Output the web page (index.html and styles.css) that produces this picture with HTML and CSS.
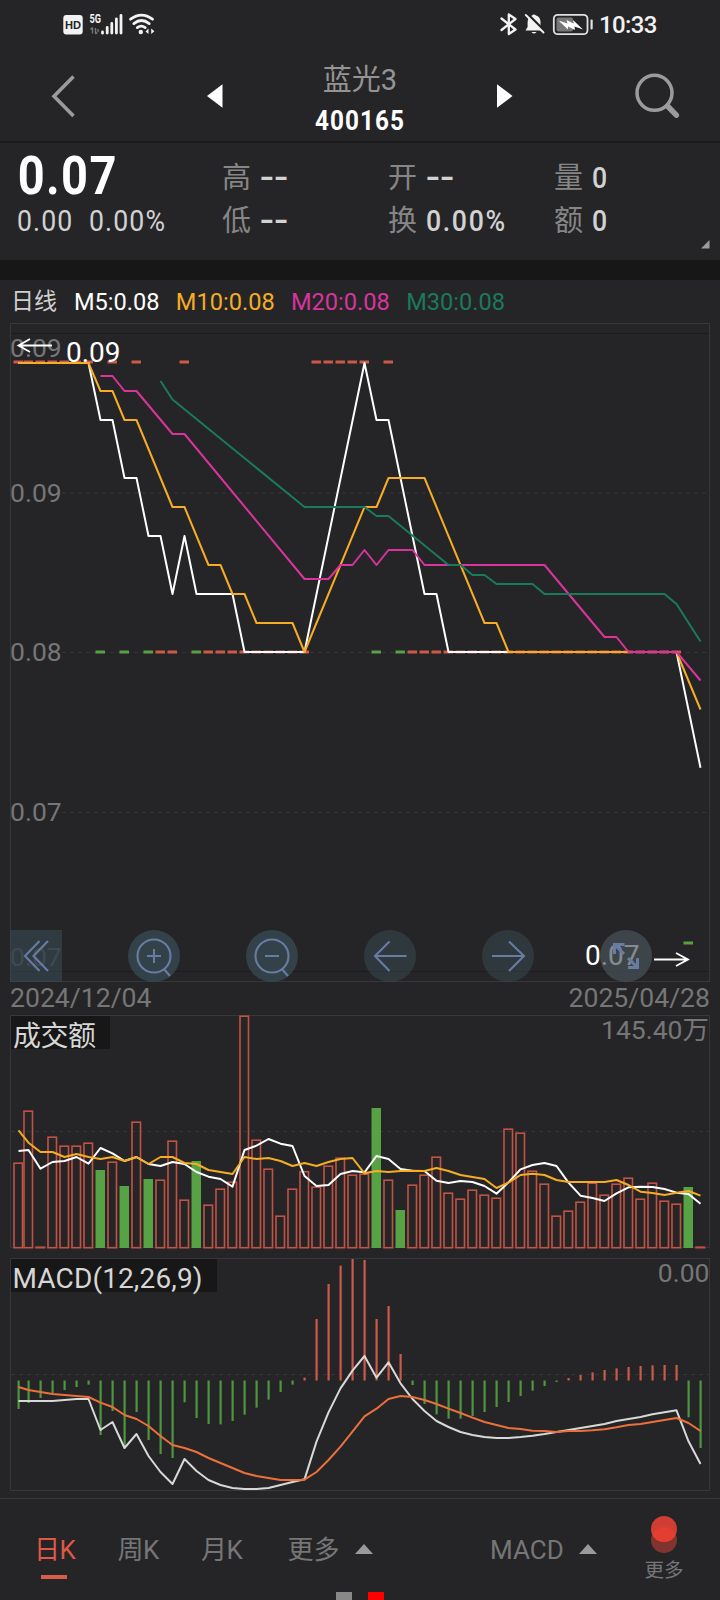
FILE: index.html
```html
<!DOCTYPE html>
<html lang="zh-CN">
<head>
<meta charset="utf-8">
<title>蓝光3 400165</title>
<link rel="stylesheet" href="styles.css">
</head>
<body>
<div class="status">
  <svg class="status-left" width="100" height="48" viewBox="60 0 100 48">
    <rect x="63.3" y="15" width="19.4" height="19.6" rx="3" fill="#f2f2f2"/>
    <text x="73" y="29.2" class="hd" text-anchor="middle" textLength="16" lengthAdjust="spacingAndGlyphs">HD</text>
    <text x="89.5" y="22.5" class="fiveg" textLength="11.5" lengthAdjust="spacingAndGlyphs">5G</text>
    <path d="M92.5 27.5v6M90.5 29.5l2-2M95.5 28v6M97.500 32.500l-2 1.500M98 29v3" stroke="#777" stroke-width="1.400" fill="none"/>
    <path d="M102.500 32v1.200M107.200 27.500v5.500M111.800 23.500v9.500M116.400 19v14M121 15.500v17.500" stroke="#f2f2f2" stroke-width="2.800" stroke-linecap="round"/>
    <g fill="none" stroke="#f2f2f2" stroke-width="2.800" stroke-linecap="round">
      <path d="M130.500 19.200Q141.500 11 152.500 19.200M133.800 23.600Q141.500 17.500 149.200 23.600M137.300 27.600Q141.200 24.600 145.200 27.600"/>
    </g>
    <circle cx="140.800" cy="32" r="2.200" fill="#f2f2f2"/>
    <path d="M148.500 28.500v5.500l-3-2.500zM151.200 34v-5.500l3.200 2.800z" fill="#f2f2f2"/>
  </svg>
  <div class="status-right">
    <svg width="100" height="48" viewBox="496 0 100 48">
      <path d="M501.500 18.500L515.500 29.500L508.800 34V14.500L515.500 19L501.500 30" fill="none" stroke="#f2f2f2" stroke-width="2.300" stroke-linejoin="round" stroke-linecap="round"/>
      <path d="M526 30.500H543L540.500 27V21.500Q540 16.500 536 15.500Q534 13.300 532 15.500Q527.800 17 527.600 22V27L525.500 30.500ZM531.500 32h5q-2.500 3.200-5 0z" fill="#f2f2f2"/>
      <path d="M527 13.500L545.500 32" stroke="#252527" stroke-width="2.500"/>
      <path d="M525.800 15L543.500 32.500" stroke="#f2f2f2" stroke-width="1.900" stroke-linecap="round"/>
      <rect x="553.800" y="14.800" width="33.700" height="19.400" rx="4" fill="none" stroke="#e0e0e0" stroke-width="1.800"/>
      <rect x="556.500" y="17.500" width="16.500" height="14" rx="2" fill="#777"/>
      <path d="M558.500 20.500L567.500 23.500L566.500 20L573.500 23.500L573 20L583 29.500L574.500 26.500L575 30L568 26.500L568 29.500Z" fill="#fff"/>
      <rect x="590.500" y="19.500" width="2.200" height="10" rx="1" fill="#e0e0e0"/>
    </svg>
    <span class="clock">10:33</span>
  </div>
</div>

<header class="header">
  <svg class="back" width="40" height="48" viewBox="44 72 40 48"><path d="M73.500 76.500L54 96.200L73.500 116" fill="none" stroke="#9b9b9b" stroke-width="3.600"/></svg>
  <svg class="prev" width="16" height="24" viewBox="0 0 16 24"><path d="M0 12L15.500 .3V23.700Z" fill="#fff"/></svg>
  <div class="title"><div class="name">蓝光<span>3</span></div><div class="code">400165</div></div>
  <svg class="next" width="16" height="24" viewBox="0 0 16 24"><path d="M15.500 12L0 .3V23.700Z" fill="#fff"/></svg>
  <svg class="search" width="48" height="48" viewBox="634 72 48 48"><circle cx="654.500" cy="92.800" r="17.500" fill="none" stroke="#9b9b9b" stroke-width="3.500"/><path d="M667.500 106L676.300 115.200" stroke="#9b9b9b" stroke-width="5.500" stroke-linecap="round"/></svg>
</header>

<section class="quote">
  <div class="price"><div class="last">0.07</div><div class="chg"><span>0.00</span><span>0.00%</span></div></div>
  <div class="pair"><div><i>高</i><b class="dash">--</b></div><div><i>低</i><b class="dash">--</b></div></div>
  <div class="pair"><div><i>开</i><b class="dash">--</b></div><div><i>换</i><b>0.00%</b></div></div>
  <div class="pair"><div><i>量</i><b>0</b></div><div><i>额</i><b>0</b></div></div>
  <svg class="corner" width="9" height="9" viewBox="0 0 9 9"><path d="M8.500 0V8.500H0Z" fill="#9b9b9b"/></svg>
</section>

<div class="legend"><span class="kline">日线</span><span class="m5">M5:0.08</span><span class="m10">M10:0.08</span><span class="m20">M20:0.08</span><span class="m30">M30:0.08</span></div>

<svg class="chart" width="720" height="660" viewBox="0 323 720 660">
  <rect class="frame" x="10.500" y="323.500" width="699" height="658"/>
  <path d="M11 333.500H709M11 971.500H709" stroke="#1c1c1e"/>
  <path class="grid" d="M62 493H709M62 652.500H709M62 812.500H709"/>
  <g class="axis"><text x="10" y="356.700">0.09</text><text x="10" y="502">0.09</text><text x="10" y="661">0.08</text><text x="10" y="821">0.07</text><text x="10" y="966" opacity=".35">0.07</text></g>
  <g id="candles"></g>
  <g id="averages"></g>
  <g class="mark"><text x="66" y="362">0.09</text><text x="585" y="964.600">0.07</text></g>
  <path d="M52 345.500H19M30 339L18.500 345.500L30 352M654 959.500H687M676 953L688 959.500L676 966" fill="none" stroke="#fff" stroke-width="1.800"/>
  <g fill="#3b515c" fill-opacity=".5">
    <rect x="10" y="930" width="52" height="52"/>
    <circle cx="154" cy="956" r="26" fill-opacity=".64"/><circle cx="272" cy="956" r="26" fill-opacity=".64"/>
    <circle cx="390" cy="956" r="26" fill-opacity=".44"/><circle cx="508" cy="956" r="26" fill-opacity=".44"/>
  </g>
  <circle cx="626" cy="956" r="26" fill="#4b565c" fill-opacity=".68"/>
  <g fill="none" stroke="#687ca3" stroke-width="2.100">
    <path d="M39.500 941L25 956L39.500 971M48 941L33.500 956L48 971"/>
    <circle cx="154" cy="956" r="16.500"/><path d="M163.500 968.500L170 976M147 956H161M154 949V963"/>
    <circle cx="272" cy="956" r="16.500"/><path d="M281.500 968.500L288 976M265 956H279"/>
    <path d="M389.500 941.500L375 956L389.500 971M375 956H406.500M509 941.500L524 956L509 971M524 956H492"/>
    <path d="M624.500 944.500H614.500V954M615 945L624 954M628 967.500H637.500V958M637 967L628 958" stroke-width="3"/>
  </g>
</svg>

<div class="dates"><span>2024/12/04</span><span>2025/04/28</span></div>

<svg class="chart volume" width="720" height="234" viewBox="0 1015 720 234">
  <rect class="frame" x="10.500" y="1015.500" width="699" height="232"/>
  <path class="grid" d="M11 1131.500H709"/>
  <g id="volume"></g>
  <g class="axis"><text x="709" y="1039" text-anchor="end">145.40万</text></g>
  <rect x="11" y="1016" width="99" height="33" fill="#171717"/>
  <text class="caption" x="13" y="1045.500" textLength="83">成交额</text>
</svg>

<svg class="chart macd" width="720" height="234" viewBox="0 1258 720 234">
  <rect class="frame" x="10.500" y="1258.500" width="699" height="232"/>
  <path class="grid" d="M11 1374.500H709"/>
  <rect x="11" y="1259" width="206" height="33" fill="#171717"/>
  <g class="axis"><text x="709.500" y="1282" text-anchor="end">0.00</text></g>
  <text class="caption" x="12.500" y="1288" textLength="190">MACD(12,26,9)</text>
  <g id="macd"></g>
</svg>

<nav class="tabs">
  <span class="tab active">日K</span><span class="tab">周K</span><span class="tab">月K</span>
  <span class="tab menu">更多<i class="up"></i></span>
  <span class="tab menu indicator">MACD<i class="up"></i></span>
  <div class="more">
    <svg width="28" height="40" viewBox="0 0 28 40"><circle cx="14" cy="25" r="13" fill="#81332f"/><circle cx="14" cy="14" r="13" fill="#cf3d33"/><path d="M2.200 19.500A13 13 0 0 1 25.800 19.500A13 13 0 0 1 2.200 19.500Z" fill="#e33e30"/></svg>
    <span>更多</span>
  </div>
  <div class="pages"><i></i><i class="on"></i></div>
</nav>
<script src="charts.js"></script>
</body>
</html>
```

FILE: styles.css
```css
* { box-sizing: border-box; }
body { margin: 0; width: 720px; height: 1600px; overflow: hidden; display: flex; flex-direction: column; background: #252527; color: #fff; font-family: Roboto, "Noto Sans CJK SC", sans-serif; }
svg { display: block; flex: none; }
i, b { font-style: normal; font-weight: 400; }
.status { height: 48px; flex: none; display: flex; justify-content: space-between; padding: 0 63px 0 60px; }
.status-right { display: flex; }
.clock { width: 61px; font-size: 24px; line-height: 50px; font-weight: 500; letter-spacing: -.6px; padding-left: 3px; color: #f2f2f2; }
.hd { font: 700 11px "Liberation Sans", sans-serif; fill: #252527; }
.fiveg { font-size: 12px; font-weight: 700; fill: #f2f2f2; }
.header { height: 95px; flex: none; display: flex; border-bottom: 2px solid #1b1b1d; padding: 0 38px 0 44px; }
.back, .search { margin-top: 24px; }
.prev { margin: 36px 0 0 123px; }
.title { width: 274px; text-align: center; }
.name { margin-top: 12px; height: 41px; line-height: 40px; font-size: 29px; font-weight: 400; color: #949494; }
.code { line-height: 38px; font-size: 27px; font-weight: 700; letter-spacing: 1.2px; margin-top: 1px; transform: scaleX(.9); }
.next { margin-top: 36px; }
.search { margin-left: auto; }
.quote { height: 117px; flex: none; display: flex; position: relative; padding-left: 16px; }
.price { width: 206px; }
.last { font-size: 54px; font-weight: 700; line-height: 44px; margin-top: 11px; transform: scaleX(.87); transform-origin: left; letter-spacing: 1.6px; height: 45px; padding-left: 2px; }
.chg { display: flex; gap: 17px; font-size: 29px; line-height: 45px; color: #d2d2d2; letter-spacing: 1.2px; transform: scaleX(.92); transform-origin: left; padding-left: 1px; }
.pair { width: 166px; padding-top: 14px; }
.pair > div { height: 43px; line-height: 43px; display: flex; gap: 8px; font-size: 29px; color: #d2d2d2; }
.pair i { font-size: 29px; font-weight: 400; color: #868686; line-height: 42px; width: 29px; }
.pair b { font-weight: 500; letter-spacing: 1.8px; transform: scaleX(.92); transform-origin: left; padding-left: 1px; }
.pair .dash { font-weight: 700; transform: translate(-1px, -1px) scaleX(1.35); letter-spacing: -1px; }
.corner { position: absolute; right: 10px; bottom: 11px; }
.legend { height: 63px; flex: none; border-top: 20px solid #171717; display: flex; gap: 16.300px; padding-left: 11px; font-size: 23.600px; line-height: 44px; }
.kline { font-size: 23px; color: #d0d0d0; width: 46.700px; }
.m10 { color: #f6ad24; }
.m20 { color: #d9349e; }
.m30 { color: #1a7a5a; }
.chart text { font-size: 26.500px; }
.frame { fill: none; stroke: #373739; }
.grid { stroke: #363638; stroke-dasharray: 4 4; fill: none; }
.axis { fill: #767676; }
.chart .mark text { font-size: 28px; fill: #fff; }
.chart .caption { font-size: 28px; fill: #d6d6d6; }
.line { fill: none; stroke-width: 2; stroke-linejoin: round; }
.dates { height: 32px; flex: none; display: flex; justify-content: space-between; padding: 0 10px; font-size: 26.600px; line-height: 29px; color: #767676; }
.macd { margin-top: 9px; }
.tabs { margin-top: 6px; flex: 1; border-top: 1px solid #38383a; position: relative; display: flex; padding-left: 34px; color: #767676; font-size: 26px; }
.tab { width: 83.500px; line-height: 103px; height: 81px; white-space: nowrap; letter-spacing: -.4px; }
.tab.active { color: #de5845; position: relative; }
.tab.active::after { content: ""; position: absolute; left: 7px; top: 76px; width: 26px; height: 4px; background: #d95c4b; }
.menu { display: flex; width: 205.500px; padding-left: 3px; letter-spacing: 0; }
.up { width: 0; height: 0; border: 9px solid transparent; border-top: 0; border-bottom: 10px solid #9a9a9a; margin: 45px 0 0 15px; }
.indicator { width: 152px; padding-left: 0; }
.more { font-size: 19.500px; line-height: 32px; display: flex; flex-direction: column; align-items: center; width: 44px; padding-top: 16px; }
.pages { position: absolute; left: 336px; bottom: 0; display: flex; gap: 16px; }
.pages i { width: 16px; height: 8px; background: #888; }
.pages .on { background: #f00; }
```

FILE: charts.js
```js
const NS = 'http://www.w3.org/2000/svg';
const RED = '#cb5a4a', GREEN = '#57a244';
const X = i => i === 0 ? 18.5 : 16.5 + 12 * i;

function add(id, tag, attrs) {
  const el = document.createElementNS(NS, tag);
  for (const k in attrs) el.setAttribute(k, attrs[k]);
  document.getElementById(id).appendChild(el);
}
function line(id, points, color) {
  add(id, 'polyline', { class: 'line', stroke: color, points: points.map(([i, y]) => X(i) + ',' + y).join(' ') });
}

// Daily candles: flat sessions at one of three prices.
const range = (a, b) => Array.from({ length: b - a + 1 }, (_, k) => a + k);
const candle = (i, y, c) => add('candles', 'rect', { x: X(i) - 5, y: y - 1.5, width: 9.5, height: 3, fill: c });
[...range(0, 6), 8, 10, 14, ...range(25, 29), 31].forEach(i => candle(i, 362, RED));
[12, 13, ...range(16, 24), ...range(33, 55)].forEach(i => candle(i, 652, RED));
[7, 9, 11, 15, 30, 32].forEach(i => candle(i, 652, GREEN));
candle(56, 943, GREEN);

// Moving averages.
line('averages', [[0,363],[6,363],[7,420],[8,420],[9,478],[10,478],[11,536],[12,536],[13,594],[14,536],[15,594],[18,594],[19,652],[24,652],[29,363],[30,420],[31,420],[34,594],[35,594],[36,652],[55,652],[57,767.7]], '#fff');
line('averages', [[0,363],[6,363],[7,391],[8,391],[9,420],[10,420],[13,507],[14,507],[16,565],[17,565],[18,594],[19,594],[20,623],[23,623],[24,652],[29,507],[30,507],[31,478],[34,478],[39,623],[40,623],[41,652],[55,652],[57,709.5]], '#f6ad24');
line('averages', [[7,376],[8,376],[9,391],[10,391],[13,434],[14,434],[24,579],[26,579],[27,565],[28,565],[29,550],[30,565],[31,550],[33,550],[34,565],[44,565],[49,637],[50,637],[51,652],[55,652],[57,680.5]], '#d9349e');
line('averages', [[12,381],[13,399.5],[24,507],[29,507],[30,516],[31,516],[36,565],[37,565],[38,575],[39,575],[40,584],[43,584],[44,594],[54,594],[55,604],[57,641.5]], '#1a7a5a');

// Turnover bars with their two averages.
const vol = [1163,1111,1247,1137,1146,1146,1143,1170,1162,1186,1122,1179,1180,1141,1200,1161,1205,1189,1182,1016,1140,1169,1216,1189,1171.5,1187,1166,1158,1175,1174,1108,1180,1210,1185,1175,1157,1193,1199,1190,1195,1198,1129,1133,1171,1184,1216,1211,1202,1183,1195,1184,1178,1199,1183,1201,1204,1187,1247];
const down = [7, 9, 11, 15, 30, 32, 56];
vol.forEach((y, i) => {
  if (down.includes(i)) add('volume', 'rect', { x: X(i) - 5, y, width: 9.5, height: 1248 - y, fill: GREEN });
  else add('volume', 'rect', { x: X(i) - 4.5, y: y + .2, width: 8.5, height: 1247.5 - y, fill: 'none', stroke: '#c25344', 'stroke-width': 1.6 });
});
const scaled = (base, a) => a.map((z, i) => [i, base + z / 3]);
line('volume', scaled(1010, [423,420,476,456,453,441,461,414,430,453,441,462,468,456,462,486,500,507,530,420,407,387,401,408,498,528,525,492,483,487,438,447,477,482,483,512,519,513,516,528,551,517,478,465,459,468,518,557,564,573,550,532,530,531,537,548,552,581]), '#fff');
line('volume', scaled(1010, [361,398,426,426,441,432,441,447,441,453,441,462,441,441,459,462,480,486,492,441,447,444,453,468,459,468,456,447,444,490,483,486,483,482,483,474,483,495,501,507,534,518,495,491,495,510,516,516,516,516,510,525,545,549,555,548,543,557]), '#f6ad24');

// MACD histogram, DIF and DEA.
[477,459,444,430,420,411,404,555,483,590,486,570,612,624,457,504,522,523,513,494,473,449,426,404,383,207,102,47,27,30,207,168,312,405,462,493,506,506,498,486,471,456,438,422,408,396,384,375,367,360,355,351,348,346,345,345,502,594].forEach((z, i) => {
  const y = 1250 + z / 3, zero = 1380.5;
  add('macd', 'rect', { x: X(i) - 1, y: Math.min(y, zero), width: 2.2, height: Math.abs(y - zero), fill: y < zero ? RED : '#4f9641' });
});
line('macd', scaled(1250, [453,453,453,453,450,447,447,540,516,594,552,618,666,702,627,663,690,705,714,717,717,714,705,696,688,575,487,415,362,318,383,337,400,447,483,513,531,546,555,561,564,564,561,557,552,546,540,534,528,522,513,507,501,493,487,481,574,642]), '#d8d8d8');
line('macd', scaled(1250, [411,420,426,432,435,438,441,458,471,495,507,528,558,585,594,606,624,639,654,669,678,684,690,690,689,666,630,590,545,499,476,447,438,441,450,462,476,489,503,516,525,534,537,542,543,546,543,543,541,538,532,525,522,516,510,504,519,543]), '#ec703a');
```
